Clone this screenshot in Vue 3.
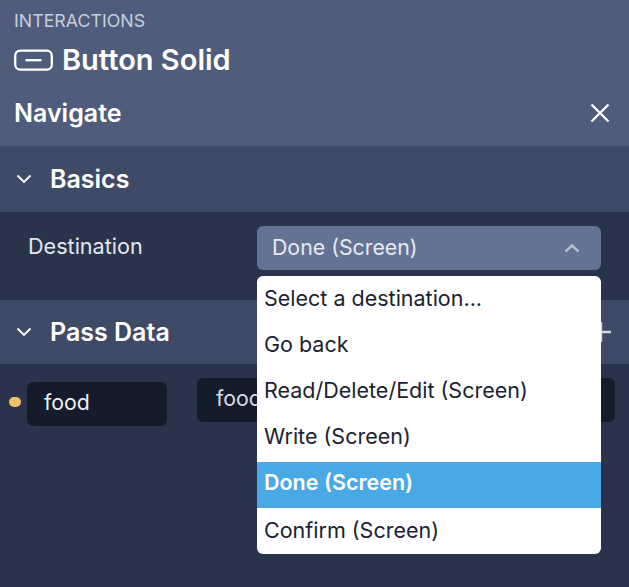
<script setup>
const options = [
  { label: 'Select a destination...', cls: '' },
  { label: 'Go back', cls: '' },
  { label: 'Read/Delete/Edit (Screen)', cls: '' },
  { label: 'Write (Screen)', cls: 'before-selected' },
  { label: 'Done (Screen)', cls: 'selected' },
  { label: 'Confirm (Screen)', cls: '' },
]
</script>

<template>
  <div class="panel">
    <header class="head">
      <div class="eyebrow">INTERACTIONS</div>
      <div class="title-row">
        <svg class="btn-icon" width="40" height="22" viewBox="0 0 40 22" fill="none">
          <rect x="1.2" y="1.7" width="36.6" height="19" rx="5" stroke="#fff" stroke-width="2.3" />
          <path d="M11.5 11.2H27.5" stroke="#fff" stroke-width="2.3" />
        </svg>
        <span class="title">Button Solid</span>
      </div>
      <div class="nav-row">
        <span class="nav">Navigate</span>
        <svg width="20" height="20" viewBox="0 0 20 20" fill="none">
          <path d="M1.5 1.5L18.5 18.5M18.5 1.5L1.5 18.5" stroke="#fff" stroke-width="2.2" />
        </svg>
      </div>
    </header>

    <section class="sec-head">
      <svg class="chev" width="16" height="10" viewBox="0 0 16 10" fill="none">
        <path d="M1.5 1.5L8 8L14.5 1.5" stroke="#fff" stroke-width="1.8" />
      </svg>
      <span>Basics</span>
    </section>

    <section class="dest-row">
      <span class="dest-label">Destination</span>
      <div class="select-wrap">
        <div class="select">
          <span class="select-text">Done (Screen)</span>
          <svg width="16" height="10" viewBox="0 0 16 10" fill="none">
            <path d="M1.5 8.5L8 2.5L14.5 8.5" stroke="#b4bccb" stroke-width="2.4" />
          </svg>
        </div>
        <ul class="menu">
          <li v-for="o in options" :key="o.label" class="item" :class="o.cls">{{ o.label }}</li>
        </ul>
      </div>
    </section>

    <section class="sec-head pass">
      <svg class="chev" width="16" height="10" viewBox="0 0 16 10" fill="none">
        <path d="M1.5 1.5L8 8L14.5 1.5" stroke="#fff" stroke-width="1.8" />
      </svg>
      <span>Pass Data</span>
      <svg class="plus" width="22" height="22" viewBox="0 0 22 22" fill="none">
        <path d="M11 1V21M1 11H21" stroke="#d5d9e2" stroke-width="2.4" />
      </svg>
    </section>

    <section class="data-row">
      <span class="dot"></span>
      <div class="chip">food</div>
      <div class="field">food</div>
    </section>
  </div>
</template>

<style>
html, body { margin: 0; background: #29334b; }
</style>

<style scoped>
.panel {
  width: 629px;
  height: 587px;
  overflow: hidden;
  background: #29334b;
  color: #fff;
  font-family: Inter, "Liberation Sans", sans-serif;
  box-sizing: border-box;
}
.head {
  height: 146px;
  background: #505c7c;
  padding: 11px 14px 0;
  box-sizing: border-box;
}
.eyebrow {
  font-size: 17.8px;
  line-height: 19px;
  color: #c7cedd;
}
.title-row {
  display: flex;
  align-items: center;
  gap: 8px;
  margin-top: 10px;
  height: 40px;
}
.btn-icon { display: block; }
.title {
  font-size: 29px;
  font-weight: 600;
  line-height: 40px;
}
.nav-row {
  display: flex;
  align-items: center;
  justify-content: space-between;
  margin-top: 18px;
  height: 30px;
  padding-right: 5px;
}
.nav {
  font-size: 25px;
  font-weight: 600;
  line-height: 30px;
}
.sec-head {
  height: 66px;
  background: #3f4a66;
  display: flex;
  align-items: center;
  padding-left: 16px;
  gap: 18px;
  font-size: 25px;
  font-weight: 600;
  box-sizing: border-box;
}
.pass {
  height: 64px;
  position: relative;
}
.plus {
  position: absolute;
  left: 590px;
  top: 21px;
}
.dest-row {
  height: 88px;
  display: flex;
  padding: 14px 28px 0;
  box-sizing: border-box;
  position: relative;
  z-index: 2;
}
.dest-label {
  width: 229px;
  font-size: 21.6px;
  line-height: 40px;
  color: #e3e7ef;
}
.select-wrap {
  position: relative;
  width: 344px;
}
.select {
  height: 44px;
  border-radius: 6px;
  background: #647394;
  display: flex;
  align-items: center;
  justify-content: space-between;
  padding: 0 21px 0 15px;
  font-size: 21.3px;
  color: #e6e9f0;
}
.select-text {
  padding-bottom: 2px;
}
.menu {
  position: absolute;
  left: 0;
  top: 50px;
  width: 344px;
  margin: 0;
  padding: 0;
  list-style: none;
  background: #fff;
  border-radius: 6px;
  overflow: hidden;
  color: #1a2234;
  font-size: 21.5px;
}
.item {
  height: 46px;
  line-height: 44px;
  padding-left: 7px;
}
.before-selected { height: 48px; }
.selected {
  background: #49a9e4;
  color: #fff;
  font-weight: 600;
  line-height: 41px;
}
.data-row {
  position: relative;
  display: flex;
  align-items: flex-start;
  padding: 14px 14px 0 9px;
}
.dot {
  width: 12px;
  height: 10px;
  border-radius: 5px;
  background: #f3c069;
  margin-top: 19px;
  margin-right: 6px;
}
.chip {
  width: 140px;
  height: 44px;
  margin-top: 4px;
  border-radius: 6px;
  background: #141b2b;
  padding-left: 17px;
  box-sizing: border-box;
  font-size: 21.3px;
  line-height: 40px;
  color: #eef0f5;
}
.field {
  width: 418px;
  height: 44px;
  margin-left: 30px;
  border-radius: 6px;
  background: #141b2b;
  padding-left: 19px;
  box-sizing: border-box;
  font-size: 21.3px;
  line-height: 41px;
  color: #d8dce6;
}
</style>
